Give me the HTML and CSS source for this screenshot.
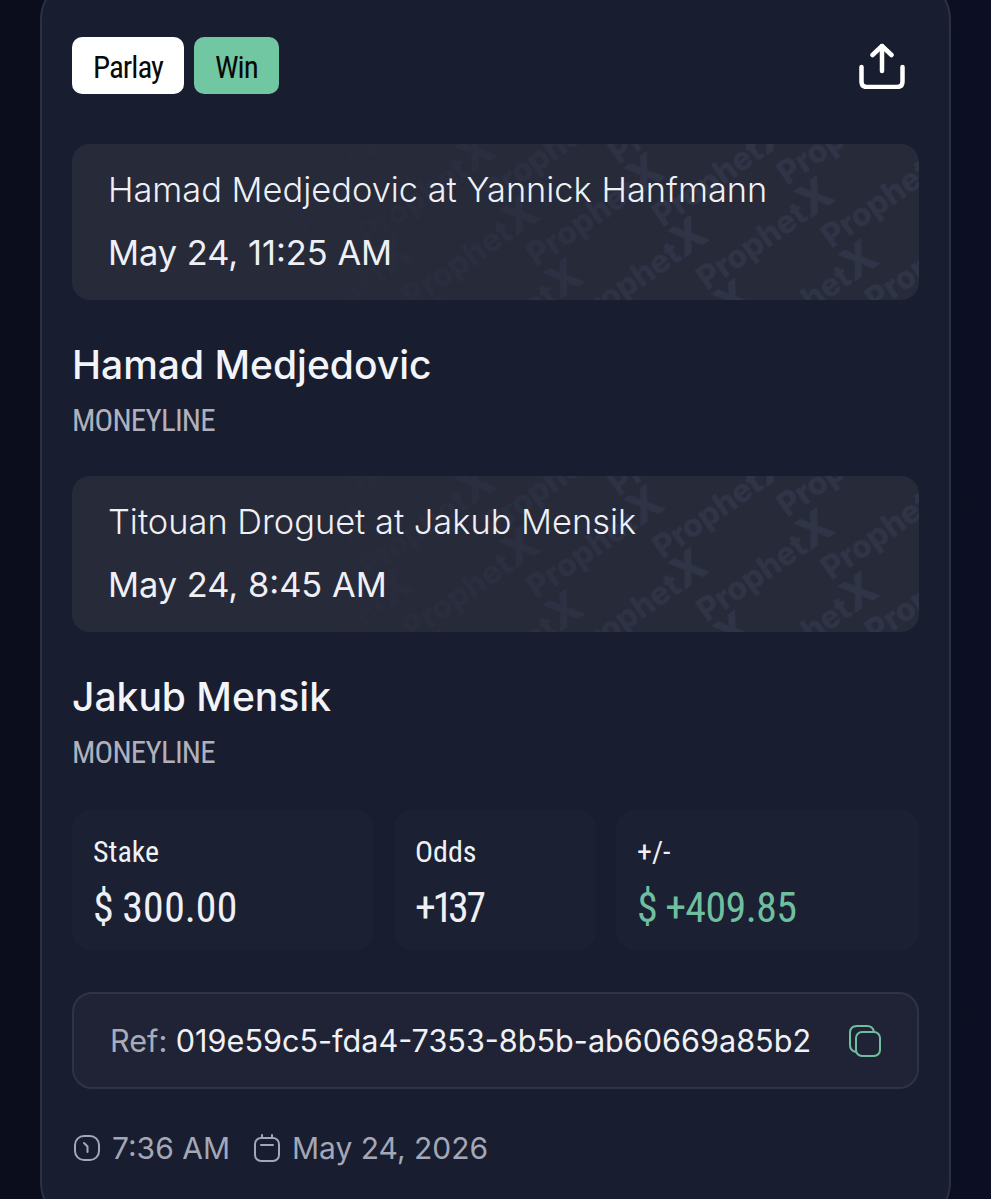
FILE: index.html
```html
<!DOCTYPE html>
<html lang="en">
<head>
  <meta charset="UTF-8">
  <meta name="viewport" content="width=device-width, initial-scale=1.0">
  <title>Bet Ticket</title>
  <link rel="stylesheet" href="styles.css">
</head>
<body>
  <div class="card">
    <div class="card-top">
      <div class="badges">
        <span class="badge badge-type">Parlay</span>
        <span class="badge badge-win">Win</span>
      </div>
      <svg class="share-icon" viewBox="0 0 46 46" fill="none" stroke="#fff" stroke-width="4.5" stroke-linecap="round" stroke-linejoin="round">
        <path d="M23 28V3"/>
        <path d="M13.5 12L23 3L32.5 12"/>
        <path d="M2.5 24V38.5Q2.5 44 8 44H38Q43.5 44 43.5 38.5V24"/>
      </svg>
    </div>

    <div class="event">
      <svg class="watermark" aria-hidden="true">
        <defs>
          <pattern id="wm" width="252" height="77" patternUnits="userSpaceOnUse" patternTransform="translate(616 120) rotate(-35)">
            <text class="wm-word" x="0" y="33">Prophet<tspan class="wm-x">X</tspan></text>
            <text class="wm-word" x="126" y="70">Prophet<tspan class="wm-x">X</tspan></text>
            <text class="wm-word" x="-126" y="70">Prophet<tspan class="wm-x">X</tspan></text>
          </pattern>
        </defs>
        <rect width="100%" height="100%" fill="url(#wm)"/>
      </svg>
      <div class="event-title">Hamad Medjedovic at Yannick Hanfmann</div>
      <div class="event-date">May 24, 11:25 AM</div>
    </div>
    <div class="pick">
      <div class="pick-name">Hamad Medjedovic</div>
      <div class="pick-type">MONEYLINE</div>
    </div>

    <div class="event">
      <svg class="watermark" aria-hidden="true">
        <rect width="100%" height="100%" fill="url(#wm)"/>
      </svg>
      <div class="event-title">Titouan Droguet at Jakub Mensik</div>
      <div class="event-date">May 24, 8:45 AM</div>
    </div>
    <div class="pick">
      <div class="pick-name">Jakub Mensik</div>
      <div class="pick-type">MONEYLINE</div>
    </div>

    <div class="stats">
      <div class="stat">
        <div class="stat-label">Stake</div>
        <div class="stat-value">$ 300.00</div>
      </div>
      <div class="stat">
        <div class="stat-label">Odds</div>
        <div class="stat-value stat-odds">+137</div>
      </div>
      <div class="stat">
        <div class="stat-label">+/-</div>
        <div class="stat-value stat-green">$ +409.85</div>
      </div>
    </div>

    <div class="ref">
      <div class="ref-text"><span class="ref-label">Ref:</span> 019e59c5-fda4-7353-8b5b-ab60669a85b2</div>
      <svg class="copy-icon" viewBox="0 0 32 32" fill="none" stroke="#6fbf9f" stroke-width="2">
        <rect x="7" y="7" width="24" height="24" rx="6"/>
        <path d="M7 27Q1 26 1 20V8Q1 1 8 1H18Q24 1 25 7"/>
      </svg>
    </div>

    <div class="meta">
      <svg class="meta-icon" viewBox="0 0 26 26" fill="none" stroke="#a4a7b5" stroke-width="2" stroke-linecap="round">
        <rect x="1" y="1" width="24" height="24" rx="9"/>
        <path d="M10 8L13.5 11.5V17"/>
      </svg>
      <span class="meta-text">7:36 AM</span>
      <svg class="meta-icon meta-cal" viewBox="0 0 26 28" fill="none" stroke="#a4a7b5" stroke-width="2" stroke-linecap="round">
        <rect x="1" y="4" width="24" height="23" rx="6"/>
        <path d="M8 1V4M18 1V4M7 11H19"/>
      </svg>
      <span class="meta-text">May 24, 2026</span>
    </div>
  </div>
</body>
</html>
```

FILE: styles.css
```css
html, body {
  height: 100%;
}
body {
  margin: 0;
  height: 1199px;
  overflow: hidden;
  padding: 0 40px;
  box-sizing: border-box;
  background: linear-gradient(90deg, #0b0d1d 0%, #0c0f23 100%);
  font-family: Inter, "Liberation Sans", sans-serif;
  color: #fff;
}
.card {
  margin-top: -24px;
  height: 1250px;
  box-sizing: border-box;
  padding: 59px 30px 0;
  background: #181d30;
  border: 2px solid #2b3042;
  border-radius: 44px;
}
.card-top {
  display: flex;
  justify-content: space-between;
  align-items: center;
  height: 57px;
  margin-bottom: 50px;
}
.badges {
  display: flex;
  gap: 10px;
}
.badge {
  height: 57px;
  line-height: 61px;
  padding: 0 21px;
  border-radius: 10px;
  font-family: Roboto, "Liberation Sans", sans-serif;
  font-stretch: 75%;
  font-size: 31px;
  letter-spacing: -1px;
  color: #0a0a0a;
}
.badge-type {
  background: #fff;
}
.badge-win {
  background: #72c7a3;
}
.share-icon {
  width: 46px;
  height: 46px;
  margin-right: 14px;
}
.event {
  position: relative;
  overflow: hidden;
  height: 156px;
  box-sizing: border-box;
  padding: 25px 36px 0;
  background: #272a39;
  border-radius: 18px;
}
.event-title, .event-date {
  position: relative;
  font-size: 34.4px;
  line-height: 42px;
  font-weight: 300;
  color: #eef0f5;
}
.event-date {
  margin-top: 21px;
  font-weight: 400;
}
.watermark {
  position: absolute;
  left: 0;
  top: 0;
  width: 100%;
  height: 100%;
  -webkit-mask-image: linear-gradient(90deg, transparent 28%, #000 72%);
  mask-image: linear-gradient(90deg, transparent 28%, #000 72%);
}
.wm-word {
  font-family: Inter, "Liberation Sans", sans-serif;
  font-size: 32px;
  font-weight: 800;
  fill: #303447;
}
.wm-x {
  font-size: 44px;
}
.pick {
  padding-top: 40px;
  margin-bottom: 35px;
}
.pick-name {
  font-size: 39px;
  line-height: 50px;
  font-weight: 500;
  color: #f3f4f8;
}
.pick-type {
  margin-top: 11px;
  font-family: Roboto, "Liberation Sans", sans-serif;
  font-stretch: 75%;
  font-size: 31px;
  line-height: 40px;
  letter-spacing: -0.8px;
  color: #b0b1bc;
}
.stats {
  display: grid;
  grid-template-columns: 302px 202px 303px;
  gap: 20px;
  margin-top: 37px;
}
.stat {
  height: 140px;
  box-sizing: border-box;
  padding: 22px 21px 0;
  background: #1b2032;
  border-radius: 18px;
}
.stat-label {
  font-family: Roboto, "Liberation Sans", sans-serif;
  font-stretch: 75%;
  font-size: 30px;
  line-height: 40px;
  color: #f0f1f5;
}
.stat-value {
  margin-top: 11px;
  font-family: Roboto, "Liberation Sans", sans-serif;
  font-stretch: 75%;
  font-variant-numeric: proportional-nums;
  font-size: 42px;
  line-height: 50px;
  letter-spacing: -0.5px;
  color: #eef0f5;
}
.stat-odds {
  letter-spacing: -2px;
}
.stat-green {
  letter-spacing: -1px;
  color: #6fbf9f;
}
.ref {
  display: flex;
  align-items: center;
  justify-content: space-between;
  height: 97px;
  box-sizing: border-box;
  margin-top: 42px;
  padding: 0 36px 0 36px;
  background: #1f2335;
  border: 2px solid #2e3346;
  border-radius: 20px;
}
.ref-text {
  font-size: 30.6px;
  color: #f0f1f5;
  white-space: nowrap;
}
.ref-label {
  color: #a9acb9;
}
.copy-icon {
  width: 32px;
  height: 32px;
}
.meta {
  display: flex;
  align-items: center;
  margin-top: 39px;
  padding-left: 2px;
}
.meta-icon {
  width: 26px;
  height: 26px;
  margin-right: 12px;
}
.meta-cal {
  height: 28px;
  margin-left: 24px;
}
.meta-text {
  font-size: 30px;
  line-height: 40px;
  color: #a4a7b5;
}
```
